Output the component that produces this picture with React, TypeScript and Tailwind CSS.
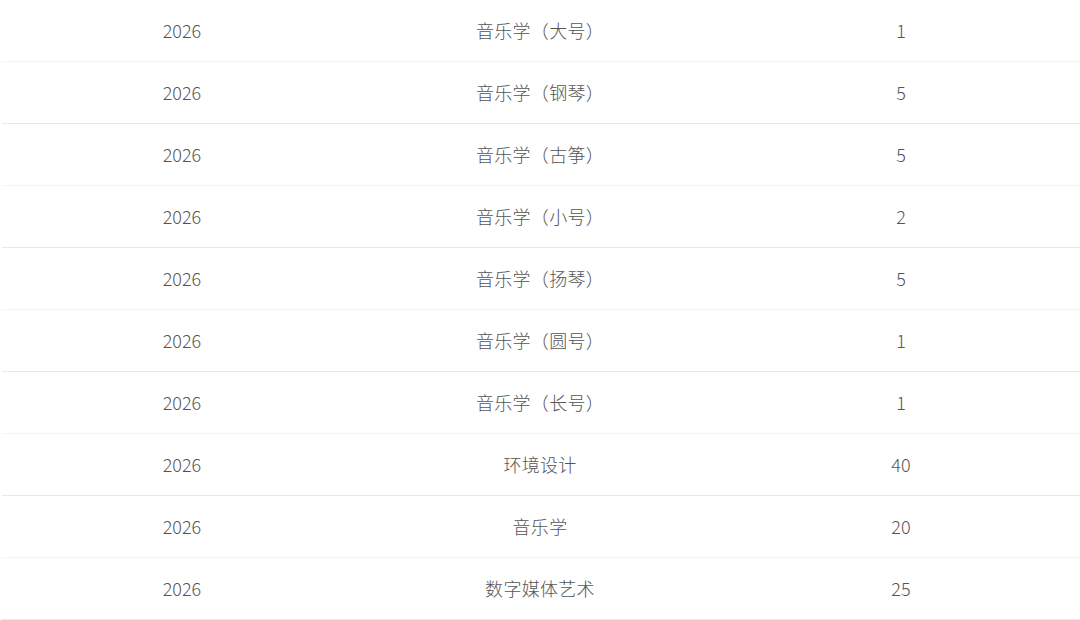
import React from "react";

const rows: [string, string, string][] = [
  ["2026", "音乐学（大号）", "1"],
  ["2026", "音乐学（钢琴）", "5"],
  ["2026", "音乐学（古筝）", "5"],
  ["2026", "音乐学（小号）", "2"],
  ["2026", "音乐学（扬琴）", "5"],
  ["2026", "音乐学（圆号）", "1"],
  ["2026", "音乐学（长号）", "1"],
  ["2026", "环境设计", "40"],
  ["2026", "音乐学", "20"],
  ["2026", "数字媒体艺术", "25"],
];

export default function App() {
  return (
    <div
      className="w-[1080px] h-[620px] overflow-hidden bg-white"
      style={{ fontFamily: '"Noto Sans CJK SC", "Noto Sans", sans-serif' }}
    >
      <div className="ml-[2px] w-[1088px] flex flex-col">
        {rows.map((r, i) => (
          <div
            key={i}
            className={`flex h-[62px] items-center border-b text-[18px] font-light text-[#555555] ${
              i % 2 === 0 ? "border-[#f3f3f8]" : "border-[#e8e8e8]"
            }`}
          >
            <div className="w-[360px] text-center">{r[0]}</div>
            <div className="w-[356px] text-center tracking-[0.3px]">{r[1]}</div>
            <div className="w-[366px] text-center">{r[2]}</div>
          </div>
        ))}
      </div>
    </div>
  );
}
